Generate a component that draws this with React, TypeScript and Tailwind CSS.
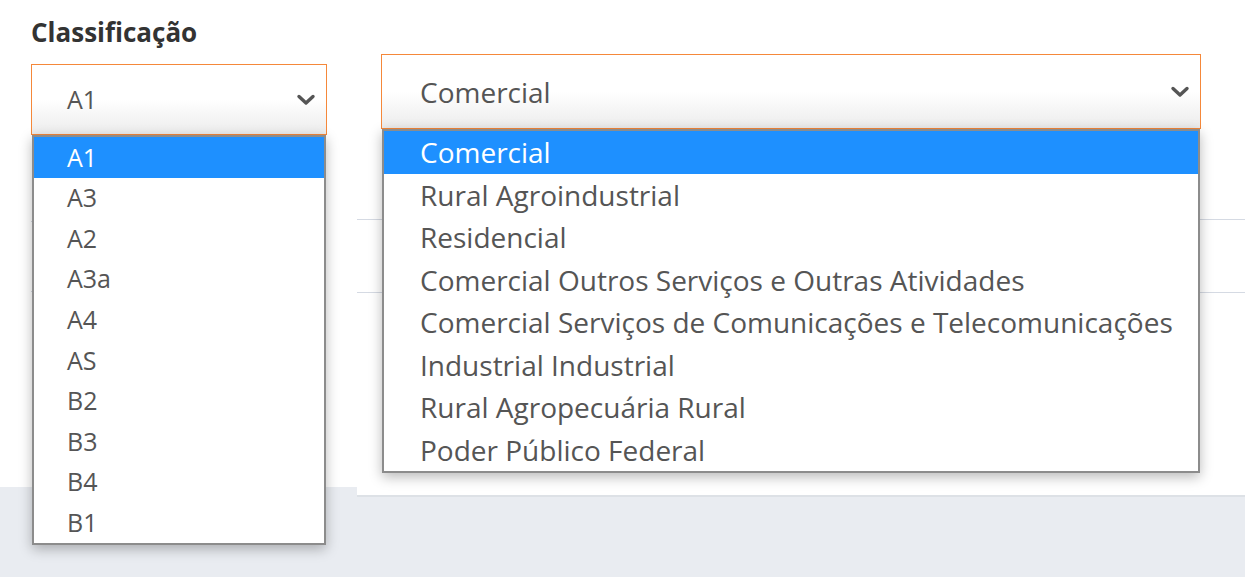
const classes = ["A1", "A3", "A2", "A3a", "A4", "AS", "B2", "B3", "B4", "B1"];
const categories = [
  "Comercial",
  "Rural Agroindustrial",
  "Residencial",
  "Comercial Outros Serviços e Outras Atividades",
  "Comercial Serviços de Comunicações e Telecomunicações",
  "Industrial Industrial",
  "Rural Agropecuária Rural",
  "Poder Público Federal",
];

const font = { fontFamily: "'Open Sans', 'Liberation Sans', sans-serif" };

// seta do select nativo (mais grossa que a do lucide)
function Chevron() {
  return (
    <svg width="20" height="12" viewBox="0 0 20 12" className="shrink-0 text-[#555]">
      <path d="M3 2.5 L10 9 L17 2.5" fill="none" stroke="currentColor" strokeWidth="3.4" strokeLinecap="round" strokeLinejoin="round" />
    </svg>
  );
}

export default function App() {
  return (
    <div className="h-[577px] w-full overflow-hidden bg-[#e9ecf1] text-[#555]" style={font}>
      <div className="flex items-start">
        {/* coluna esquerda: classificação */}
        <div className="relative h-[487px] w-[357px] bg-white px-[31px] pt-[16px]">
          <h2 className="text-[26px] font-bold leading-[32px] text-[#333]">Classificação</h2>
          <div className="relative mt-[16px] w-[296px]">
            <div className="flex h-[71px] items-center justify-between border-[1.5px] border-[#f5883a] bg-gradient-to-b from-white via-white to-[#ececec] pl-[35px] pr-[10px] text-[25px]">
              <span>A1</span>
              <Chevron />
            </div>
            <ul className="absolute left-[1px] right-[1px] top-[71px] z-10 border-2 border-[#8c8c8c] bg-white shadow-[0_4px_12px_rgba(0,0,0,0.28)]">
              {classes.map((c, i) => (
                <li
                  key={c}
                  className={`flex h-[40.6px] items-center pl-[33px] text-[25px] ${i === 0 ? "bg-[#1e90ff] text-white" : ""}`}
                >
                  {c}
                </li>
              ))}
            </ul>
          </div>
          <div className="mt-[86px] h-[71px] border-y border-[#d5dae3]" />
        </div>

        {/* coluna direita: categoria */}
        <div className="relative h-[497px] flex-1 border-b-2 border-[#dde1e6] bg-white pl-[24px] pt-[54px]">
          <div className="relative w-[820px]">
            <div className="flex h-[75px] items-center justify-between border-[1.5px] border-[#f5883a] bg-gradient-to-b from-white via-white to-[#ececec] pl-[38px] pr-[10px] text-[28px]">
              <span>Comercial</span>
              <Chevron />
            </div>
            <ul className="absolute left-[1px] right-[1px] top-[75px] z-10 border-2 border-[#8c8c8c] bg-white shadow-[0_4px_12px_rgba(0,0,0,0.28)]">
              {categories.map((c, i) => (
                <li
                  key={c}
                  className={`flex h-[42.5px] items-center pl-[36px] text-[28px] ${i === 0 ? "bg-[#1e90ff] text-white" : ""}`}
                >
                  {c}
                </li>
              ))}
            </ul>
          </div>
          <div className="-ml-[24px] mt-[90px] h-[74px] border-y border-[#d5dae3]" />
        </div>
      </div>
    </div>
  );
}
